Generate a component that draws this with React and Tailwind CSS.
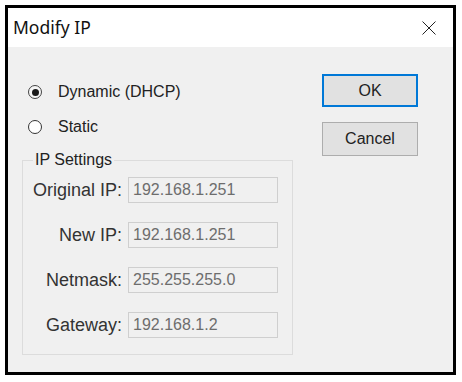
import React from "react";

const fields = [
  { label: "Original IP:", value: "192.168.1.251" },
  { label: "New IP:", value: "192.168.1.251" },
  { label: "Netmask:", value: "255.255.255.0" },
  { label: "Gateway:", value: "192.168.1.2" },
];

const Radio = ({ checked, label }) => (
  <div className="flex items-center h-[24px]">
    <span
      className={
        "w-[14px] h-[14px] rounded-full border flex items-center justify-center " +
        (checked ? "border-[#444] bg-[#f6f6f6]" : "border-[#333] bg-white")
      }
    >
      {checked && <span className="w-[7px] h-[7px] rounded-full bg-[#1a1a1a]" />}
    </span>
    <span className="ml-[16px] text-[16px] text-[#222]">{label}</span>
  </div>
);

const App = () => {
  return (
    <div
      className="w-[462px] h-[382px] bg-white p-[5px]"
      style={{ fontFamily: '"Liberation Sans", Arial, sans-serif' }}
    >
      <div className="w-[451px] h-[370px] border-[3px] border-black flex flex-col">
        {/* title bar */}
        <div className="h-[39px] bg-white flex items-center justify-between pl-[5px] pr-[17px]">
          <span
            className="text-[17.5px] text-[#111]"
            style={{ fontFamily: '"Noto Sans", "Open Sans", sans-serif' }}
          >
            Modify IP
          </span>
          <svg width="14" height="14" viewBox="0 0 14 14">
            <path d="M0.5 0.5 L13.5 13.5 M13.5 0.5 L0.5 13.5" stroke="#222" strokeWidth="1" fill="none" />
          </svg>
        </div>

        {/* body */}
        <div className="flex-1 bg-[#f0f0f0] flex pt-[27px] pl-[14px]">
          <div className="w-[271px] flex flex-col">
            <div className="ml-[6px] mt-[6px]">
              <Radio checked label="Dynamic (DHCP)" />
            </div>
            <div className="ml-[6px] mt-[11px]">
              <Radio label="Static" />
            </div>
            <fieldset className="mt-[11px] border border-[#dcdcdc] pb-[16px]">
              <legend className="ml-[10px] px-[2px] text-[16px] leading-[20px] text-[#222]">
                IP Settings
              </legend>
              <div className="flex flex-col gap-[19px] pt-[7px]">
                {fields.map((f) => (
                  <div key={f.label} className="flex items-center">
                    <span className="w-[99px] text-right text-[18px] leading-[22px] text-[#333] whitespace-nowrap">
                      {f.label}
                    </span>
                    <div className="ml-[6px] w-[150px] h-[26px] border border-[#cfcfcf] bg-[#f0f0f0] flex items-center pl-[4px] text-[16px] text-[#6d6d6d]">
                      {f.value}
                    </div>
                  </div>
                ))}
              </div>
            </fieldset>
          </div>

          <div className="ml-[29px] flex flex-col gap-[15px]">
            <button className="w-[96px] h-[33px] border-2 border-[#0078d7] bg-[#e1e1e1] text-[16px] text-[#222]">
              OK
            </button>
            <button className="w-[96px] h-[34px] border border-[#adadad] bg-[#e1e1e1] text-[16px] text-[#222]">
              Cancel
            </button>
          </div>
        </div>
      </div>
    </div>
  );
};

export default App;
